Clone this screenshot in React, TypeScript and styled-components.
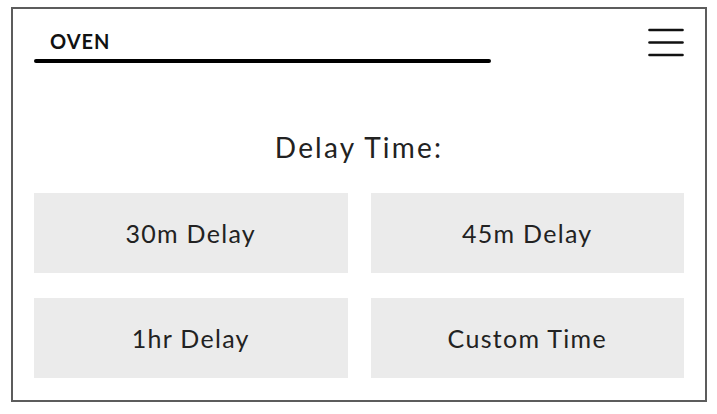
import React from "react";
import styled, { createGlobalStyle } from "styled-components";

const Global = createGlobalStyle`
  html, body { margin: 0; padding: 0; background: #ffffff; }
  body { font-family: Lato, "Noto Sans", sans-serif; color: #222; }
`;

const Frame = styled.div`
  box-sizing: border-box;
  width: 696px;
  height: 395px;
  margin: 7px 0 0 11px;
  border: 2px solid #5c5c5c;
  padding: 0 21px;
  display: flex;
  flex-direction: column;
`;

const Header = styled.header`
  display: flex;
  justify-content: space-between;
  align-items: flex-start;
  padding-top: 20px;
`;

const TitleBlock = styled.div`
  width: 457px;
  display: flex;
  flex-direction: column;
`;

const Title = styled.div`
  font-family: Lato, sans-serif;
  font-weight: 700;
  font-size: 20px;
  line-height: 24px;
  letter-spacing: 1px;
  padding-left: 16px;
  color: #111;
`;

const Underline = styled.div`
  margin-top: 6px;
  height: 4px;
  border-radius: 2px;
  background: #000;
`;

const MenuButton = styled.button`
  border: none;
  background: transparent;
  padding: 0;
  margin-top: -1px;
  width: 36px;
  height: 30px;
  display: flex;
  align-items: center;
  justify-content: center;
  cursor: pointer;
`;

const Heading = styled.h2`
  margin: 67px 0 0;
  text-align: center;
  font-family: Lato, sans-serif;
  font-weight: 400;
  font-size: 28px;
  line-height: 34px;
  letter-spacing: 2.2px;
  color: #222;
`;

const Grid = styled.div`
  margin-top: 29px;
  display: grid;
  grid-template-columns: 1fr 1fr;
  column-gap: 23px;
  row-gap: 25px;
`;

const DelayButton = styled.button`
  height: 80px;
  border: none;
  background: #ebebeb;
  font-family: Lato, sans-serif;
  font-size: 25px;
  letter-spacing: 1.3px;
  color: #222;
  display: flex;
  align-items: center;
  justify-content: center;
  cursor: pointer;
  padding: 0;
`;

const options = ["30m Delay", "45m Delay", "1hr Delay", "Custom Time"];

export default function App() {
  return (
    <>
      <Global />
      <Frame>
        <Header>
          <TitleBlock>
            <Title>OVEN</Title>
            <Underline />
          </TitleBlock>
          <MenuButton aria-label="Menu">
            <svg width="36" height="30" viewBox="0 0 36 30">
              <g stroke="#111" strokeWidth="2.6" strokeLinecap="round">
                <line x1="1.5" y1="2" x2="34.5" y2="2" />
                <line x1="1.5" y1="14.5" x2="34.5" y2="14.5" />
                <line x1="1.5" y1="27" x2="34.5" y2="27" />
              </g>
            </svg>
          </MenuButton>
        </Header>
        <Heading>Delay Time:</Heading>
        <Grid>
          {options.map((o) => (
            <DelayButton key={o}>{o}</DelayButton>
          ))}
        </Grid>
      </Frame>
    </>
  );
}
